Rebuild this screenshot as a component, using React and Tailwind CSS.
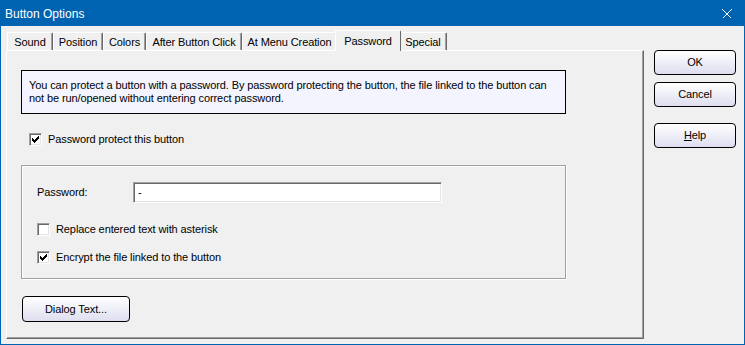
import { useState } from "react";

const ui = { fontFamily: '"Liberation Sans", Arial, sans-serif' };

const tabs = [
  { name: "Sound", w: "w-[46px]" },
  { name: "Position", w: "w-[50px]" },
  { name: "Colors", w: "w-[43px]" },
  { name: "After Button Click", w: "w-[96px]" },
  { name: "At Menu Creation", w: "w-[95px]" },
  { name: "Password", w: "w-[66px]", active: true },
  { name: "Special", w: "w-[48px]" },
];

const CheckBox = ({ checked, onChange, label }) => (
  <label className="flex items-center gap-[6px] leading-[13px] cursor-default select-none">
    <span
      onClick={onChange}
      className="w-[13px] h-[13px] bg-white border border-t-[#a0a0a0] border-l-[#a0a0a0] border-b-white border-r-white shadow-[inset_1px_1px_0_#696969,inset_-1px_-1px_0_#e3e3e3] flex items-center justify-center"
    >
      {checked && (
        <svg width="9" height="9" viewBox="0 0 9 9" shapeRendering="crispEdges">
          <path
            d="M1 3h1v1h1v1h1V4h1V3h1V2h1V1h1v3H7v1H6v1H5v1H4v1H3V7H2V6H1z"
            fill="#000"
          />
        </svg>
      )}
    </span>
    <span>{label}</span>
  </label>
);

const DlgButton = ({ children, className = "" }) => (
  <button
    className={`rounded-[4px] border border-black bg-gradient-to-b from-white to-[#dedef0] text-[11px] text-black ${className}`}
  >
    {children}
  </button>
);

export default function App() {
  const [protect, setProtect] = useState(true);
  const [asterisk, setAsterisk] = useState(false);
  const [encrypt, setEncrypt] = useState(true);

  return (
    <div
      className="w-[745px] h-[345px] border border-[#0063b1] flex flex-col bg-[#f0f0f0] text-[11px] tracking-[-0.1px] text-black"
      style={ui}
    >
      {/* Title bar */}
      <div className="h-[25px] bg-[#0063b1] flex items-center justify-between pl-[4px] pr-[12px] text-white">
        <span className="text-[12px] tracking-normal">Button Options</span>
        <svg width="10" height="10" viewBox="0 0 10 10" shapeRendering="crispEdges">
          <path d="M0.5 0.5L9.5 9.5M9.5 0.5L0.5 9.5" stroke="#fff" strokeWidth="1" />
        </svg>
      </div>

      <div className="flex-1 flex">
        {/* Tabs + panel */}
        <div className="flex flex-col pl-[5px] pt-[4px]">
          <div className="flex items-end h-[20px] pl-[1px]">
            {tabs.map((t) => (
              <div
                key={t.name}
                className={`${t.w} whitespace-nowrap flex items-center justify-center border-t border-l border-r border-t-white border-l-white border-r-[#696969] rounded-t-[2px] ${
                  t.active
                    ? "h-[21px] -mx-[2px] relative z-10 bg-[#f0f0f0] -mb-[1px]"
                    : "h-[18px] pt-[2px] shadow-[inset_-1px_0_0_#a0a0a0]"
                }`}
              >
                {t.name}
              </div>
            ))}
          </div>

          <div className="w-[638px] h-[289px] border border-t-white border-l-white border-r-[#696969] border-b-[#696969] shadow-[inset_-1px_-1px_0_#a0a0a0] pl-[14px] pt-[19px]">
            <div className="w-[545px] h-[44px] border border-black bg-[#f4f4ff] px-[7px] pt-[8px] leading-[13px]">
              You can protect a button with a password. By password protecting the button, the file linked to the button can not be run/opened without entering correct password.
            </div>

            <div className="pl-[8px] mt-[19px] h-[13px]">
              <CheckBox checked={protect} onChange={() => setProtect(!protect)} label="Password protect this button" />
            </div>

            <div className="w-[545px] h-[114px] mt-[19px] border border-[#a0a0a0] shadow-[inset_1px_1px_0_#fff,1px_1px_0_#fff] pl-[15px] pt-[16px]">
              <div className="flex items-center h-[21px]">
                <span className="w-[96px]">Password:</span>
                <div className="w-[309px] h-[21px] bg-white border border-t-[#a0a0a0] border-l-[#a0a0a0] border-b-white border-r-white shadow-[inset_1px_1px_0_#696969,inset_-1px_-1px_0_#e3e3e3] flex items-center pl-[4px]">
                  <span className="text-[11px] leading-none">-</span>
                </div>
              </div>
              <div className="mt-[20px] h-[13px]">
                <CheckBox checked={asterisk} onChange={() => setAsterisk(!asterisk)} label="Replace entered text with asterisk" />
              </div>
              <div className="mt-[15px] h-[13px]">
                <CheckBox checked={encrypt} onChange={() => setEncrypt(!encrypt)} label="Encrypt the file linked to the button" />
              </div>
            </div>

            <DlgButton className="w-[108px] h-[26px] mt-[17px] ml-[1px]">Dialog Text...</DlgButton>
          </div>
        </div>

        {/* Right buttons */}
        <div className="flex flex-col pl-[10px] pt-[24px]">
          <DlgButton className="w-[82px] h-[25px]">OK</DlgButton>
          <DlgButton className="w-[82px] h-[25px] mt-[7px]">Cancel</DlgButton>
          <DlgButton className="w-[82px] h-[25px] mt-[16px]">
            <span className="underline">H</span>elp
          </DlgButton>
        </div>
      </div>
    </div>
  );
}
